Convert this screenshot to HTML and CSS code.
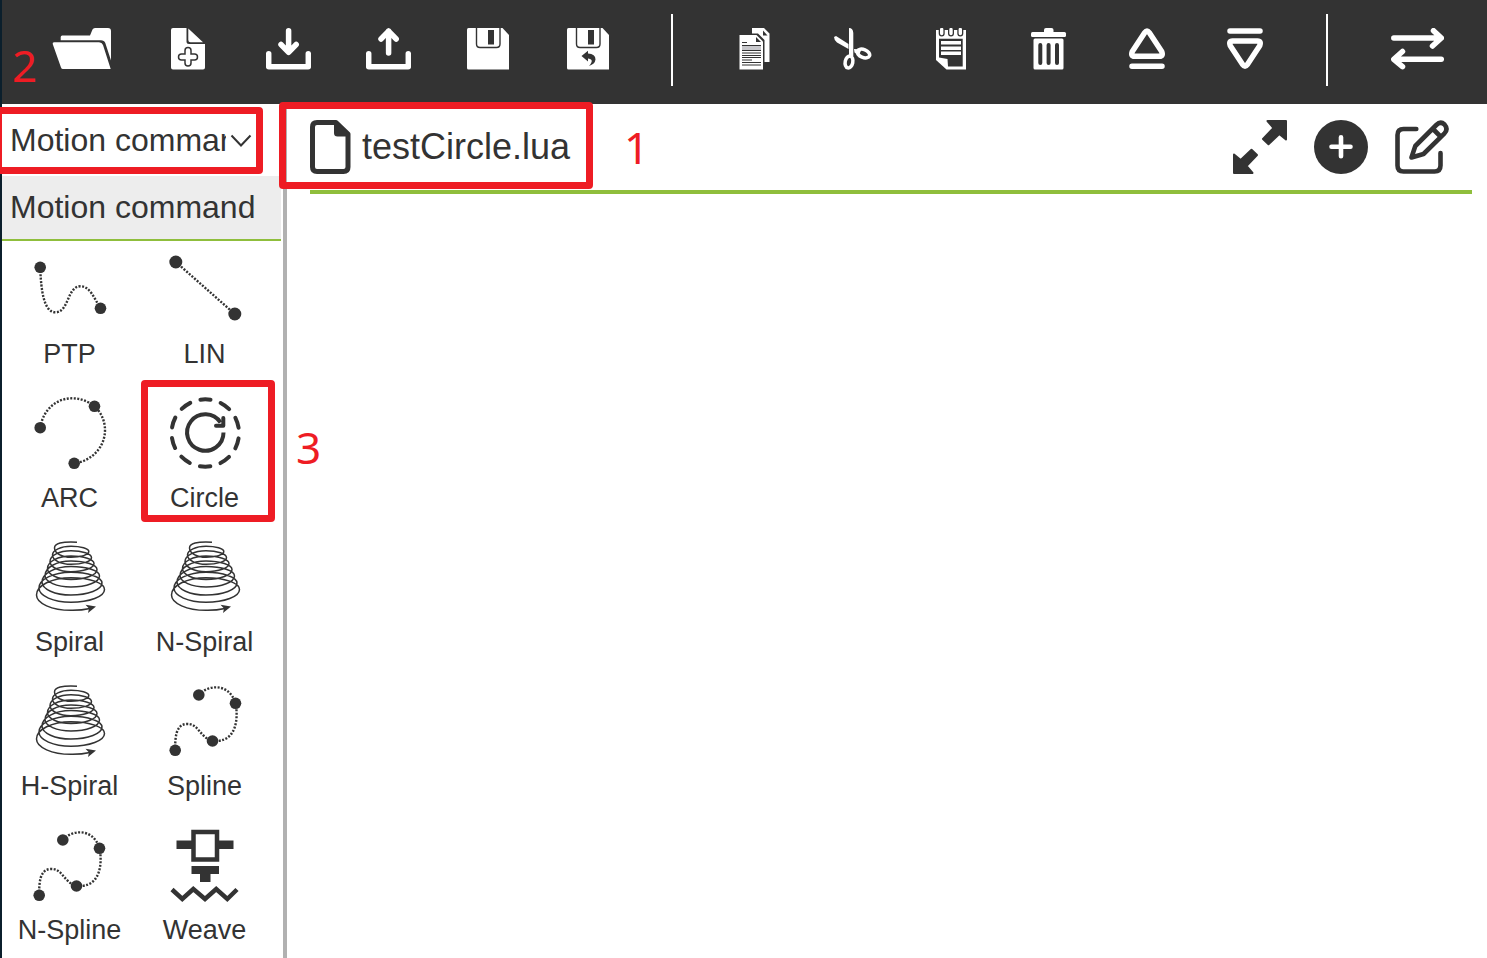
FILE: index.html
```html
<!DOCTYPE html>
<html lang="en">
<head>
<meta charset="utf-8">
<meta name="viewport" content="width=device-width, initial-scale=1">
<title>testCircle.lua</title>
<link rel="stylesheet" href="styles.css">
</head>
<body>
<svg class="defs" aria-hidden="true">
  <symbol id="spiral" viewBox="0 0 72 72">
    <path fill="none" stroke="currentColor" stroke-width="1.500" d="M43 1.2Q20.500 0 20.500 7A16.500 9.300 0 0 0 37 16.300A17.800 5.800 0 0 0 54.800 10.500A17.800 5.200 0 0 0 37 5.300A18.500 8.700 0 0 0 18.500 14A18.500 9.300 0 0 0 37 23.300A20.500 6.600 0 0 0 57.500 16.700A20.500 7 0 0 0 37 9.700A21 10.800 0 0 0 16 20.500A21 10.200 0 0 0 37 30.700A23 8.200 0 0 0 60 22.500A23 7.500 0 0 0 37 15A23.500 12.500 0 0 0 13.500 27.500A23.500 11 0 0 0 37 38.500A26 10 0 0 0 63 28.500A26 8.500 0 0 0 37 20A26 14.500 0 0 0 11 34.500A26 11.500 0 0 0 37 46A28.500 11 0 0 0 65.500 35A28.500 9.500 0 0 0 37 25.500A29 15.500 0 0 0 8 41A29 13 0 0 0 37 54A31 12 0 0 0 68 42A31 10.700 0 0 0 37 31.300A32 15.700 0 0 0 5 47A32 14.300 0 0 0 37 61.300A33.500 12.800 0 0 0 70.500 48.500A33.500 11.800 0 0 0 37 36.700A34.500 17.300 0 0 0 2.500 54A34.500 15.300 0 0 0 37 69.300Q47 69.500 56 67.500"/>
    <path fill="currentColor" d="M51.500 63.800L62 65.500 54 72 55 67.500Z"/>
  </symbol>
  <symbol id="spline" viewBox="0 0 72 72">
    <path fill="none" stroke="currentColor" stroke-width="2.400" stroke-dasharray="2 1.5" d="M29.800 10C38 0 60-3 66.500 18.300C69 30 69 55 48 56H43.500C30 52 30 38 17 39C7 40 6 52 6.200 65.300"/>
    <g fill="currentColor"><circle cx="29.800" cy="10" r="5.800"/><circle cx="66.500" cy="18.300" r="5.800"/><circle cx="43.500" cy="56" r="5.800"/><circle cx="6.200" cy="65.300" r="5.800"/></g>
  </symbol>
</svg>

<div class="app">
  <header class="toolbar">
    <div class="tools tools-file">
      <button class="tool tool-open" aria-label="Open"><svg width="60" height="44" fill="#fff"><path d="M8.700 12.300V9q0-1.500 1.500-1.500H38L40.500 1.500Q41.200 0 43 0H56Q59 0 59 3V32.500L53.300 15Q52.200 12.300 49 12.300Z"/><path d="M2 14.300H47Q50 14.300 51 17L58.700 41H11Q9.500 41 9 39.500L.7 16Q.4 14.300 2 14.300Z"/></svg></button>
      <button class="tool" aria-label="New"><svg width="34" height="44"><path fill="#fff" d="M2 0H15.500V13.500Q15.500 16 18 16H34V39.500q0 2-2 2H2q-2 0-2-2V2Q0 0 2 0ZM17.300.5L32 14.300H19.500Q17.300 14.300 17.300 12Z"/><path d="M17 22.500V35M10.500 29H23.500" stroke="#333" stroke-width="7.500" stroke-linecap="round"/><path d="M17 22.500V35M10.500 29H23.500" stroke="#fff" stroke-width="4.500" stroke-linecap="round"/></svg></button>
      <button class="tool" aria-label="Download"><svg width="45" height="44" class="line"><path d="M2.700 25.800V38.700H42.300V25.800M22.600 2.800V24M15 16.500L22.600 24.300 30.200 16.500"/></svg></button>
      <button class="tool" aria-label="Upload"><svg width="45" height="44" class="line"><path d="M2.700 25.800V38.700H42.300V25.800M22.600 3V25M15 11L22.600 3.200 30.200 11"/></svg></button>
      <button class="tool" aria-label="Save"><svg width="42" height="44"><path fill="#fff" d="M1.500 0H35.500L42 7V41.500H1.500Q0 41.500 0 40V1.500Q0 0 1.500 0Z"/><path fill="none" stroke="#333" stroke-width="1.400" d="M9.500 0V16q0 3.500 3.500 3.500H29.500q3.500 0 3.500-3.500V0"/><path fill="#333" d="M21 2H27V16.500H21Z"/></svg></button>
      <button class="tool" aria-label="Save as"><svg width="42" height="44"><path fill="#fff" d="M1.500 0H35.500L42 7V41.500H1.500Q0 41.500 0 40V1.500Q0 0 1.500 0Z"/><path fill="none" stroke="#333" stroke-width="1.400" d="M9.500 0V16q0 3.500 3.500 3.500H29.500q3.500 0 3.500-3.500V0"/><path fill="#333" d="M21 2H27V16.500H21ZM14.500 28L21 22.700V25.500Q28.500 26 28.500 31.500Q28 36 22 38Q25.500 34 24.500 32Q23.500 30.500 21 30.500V33.500Z"/></svg></button>
    </div>
    <span class="divider"></span>
    <div class="tools tools-edit">
      <button class="tool" aria-label="Copy"><svg width="31" height="44"><path fill="#fff" d="M13 5.500V0H25L30.500 5.500V34H25.500V12L19 5.500Z"/><path fill="#333" d="M24 2.500L28.500 7.500H24Z"/><path fill="#fff" d="M.5 7H17.500L24 13.500V41.500H.5Z"/><path fill="#333" d="M17 9L22 14H17Z"/><path fill="#c8c8cc" d="M3 18H22V22H3Z"/><path stroke="#333" d="M3 14.500H8M3 17.500H22M3 22.500H22M3 25H22M3 27.500H22M3 29.500H22M3 32H13M3 34.500H22M3 37H22"/></svg></button>
      <button class="tool" aria-label="Cut"><svg width="38" height="44"><path fill="#fff" d="M0 9L2 8 14.500 16V21L3 14.500Q0 12 0 9ZM15 0Q19 0 19.300 5V28L15 30ZM20 21L27.500 21.500 25 27 20.500 24.500Z"/><g fill="none" stroke="#fff" stroke-width="3.500"><ellipse cx="15" cy="34" rx="3.800" ry="6" transform="rotate(12 15 34)"/><ellipse cx="29.500" cy="25.500" rx="6.500" ry="4" transform="rotate(22 29.500 25.500)"/></g></svg></button>
      <button class="tool" aria-label="Notes"><svg width="30" height="44"><path fill="#fff" d="M0 2H30V41.500H10.500L0 32Z"/><path fill="#333" d="M3 10.700H26.700V38.500H12L11.500 31 3 29.500Z"/><path fill="#fff" d="M5 13H25V16.500H5ZM5 18.500H25V22H5ZM5 23.500H25V27H5Z"/><path stroke="#333" stroke-width="6" stroke-linecap="round" d="M5.700 1V5.500M15 1V5.500M24.300 1V5.500"/><path stroke="#fff" stroke-width="3.400" stroke-linecap="round" d="M5.700 1.500V5.500M15 1.500V5.500M24.300 1.500V5.500"/></svg></button>
      <button class="tool" aria-label="Delete"><svg width="36" height="44"><rect x="0" y="4" width="35" height="5" rx="1.500" fill="#fff"/><rect x="13" y="0" width="9.500" height="7" rx="2" fill="#fff"/><rect x="2.500" y="10.500" width="30" height="31" rx="1.500" fill="#fff"/><path stroke="#333" stroke-width="4" stroke-linecap="round" d="M9.300 17V35M17.600 17V35M26 17V35"/></svg></button>
      <button class="tool" aria-label="Move up"><svg width="36" height="44" class="line"><path d="M15.800 4.500Q18 1.400 20.200 4.500L32.700 23.500Q34.500 28.300 30.500 28.300H5.500Q1.500 28.300 3.300 23.500ZM3 38.300H33"/></svg></button>
      <button class="tool" aria-label="Move down"><svg width="36" height="44" class="line"><path transform="rotate(180 18 20.600)" d="M15.800 4.500Q18 1.400 20.200 4.500L32.700 23.500Q34.500 28.300 30.500 28.300H5.500Q1.500 28.300 3.300 23.500ZM3 38.300H33"/></svg></button>
    </div>
    <span class="divider"></span>
    <div class="tools">
      <button class="tool tool-swap" aria-label="Switch"><svg width="53" height="44" class="line"><path d="M2.800 10H50M42.500 2.700L50.300 10 41.500 18M50.300 31.300H3M11.500 23.500L2.800 31.300 11.500 38.700"/></svg></button>
    </div>
  </header>

  <div class="body">
    <aside class="sidebar">
      <div class="picker">
        <select class="picker-select" aria-label="Command group"><option>Motion command</option></select>
        <svg class="picker-arrow" width="22" height="14" fill="none" stroke="#333" stroke-width="2"><path d="M1.500 1.500L11 11.500 20.500 1.500"/></svg>
      </div>
      <h2 class="group-title">Motion command</h2>
      <div class="commands">
        <button class="command"><svg class="command-icon"><path class="dotted" d="M6.200 14C7 38 10 59.300 21.500 59.300C35 59.300 33 33.300 46.500 33.300C56 33.300 60 45 66.500 55.300"/><circle cx="6.200" cy="14.300" r="5.800"/><circle cx="66.500" cy="55.300" r="5.800"/></svg><span>PTP</span></button>
        <button class="command"><svg class="command-icon"><path class="dotted" d="M6.800 9L65.800 61"/><circle cx="6.800" cy="9" r="6.500"/><circle cx="65.800" cy="61" r="6.500"/></svg><span>LIN</span></button>
        <button class="command"><svg class="command-icon"><path class="dotted" d="M6.200 30.700C9 13 22 1.300 38.200 1.300C46 1.300 54 4 60.500 9.300C67 15 71 24 71 33C71 50 58 64 40.200 66.300"/><circle cx="6.200" cy="30.700" r="5.800"/><circle cx="60.500" cy="9.300" r="5.800"/><circle cx="40.200" cy="66.300" r="5.800"/></svg><span>ARC</span></button>
        <button class="command"><svg class="command-icon"><g fill="none" stroke="#333" stroke-width="4" stroke-linecap="round"><circle cx="36.300" cy="36" r="33.700" stroke-dasharray="10.500 10.674" stroke-dashoffset="5.250" transform="rotate(-90 36.300 36)"/><path d="M54.500 35.500A18.200 18.200 0 1 1 51.500 25.500" stroke-linecap="butt"/><path d="M54.300 21V28.700H47" stroke-linejoin="round"/></g></svg><span>Circle</span></button>
        <button class="command"><svg class="command-icon"><use href="#spiral"/></svg><span>Spiral</span></button>
        <button class="command"><svg class="command-icon"><use href="#spiral"/></svg><span>N-Spiral</span></button>
        <button class="command"><svg class="command-icon"><use href="#spiral"/></svg><span>H-Spiral</span></button>
        <button class="command"><svg class="command-icon"><use href="#spline"/></svg><span>Spline</span></button>
        <button class="command"><svg class="command-icon"><use href="#spline" x="-1" y="1"/></svg><span>N-Spline</span></button>
        <button class="command"><svg class="command-icon"><path d="M7.500 11.500H23V20H7.500ZM50 11.500H64.500V20H50ZM22.500 37H50V45H22.500ZM31 45H41.500V53H31Z"/><path fill="none" stroke="#333" stroke-width="4.500" d="M24.500 3H48V30.500H24.500ZM3 60.500L13.300 70 24.300 60 36 70 47.200 60 58.300 70 68 60.500"/></svg><span>Weave</span></button>
      </div>
    </aside>

    <main class="editor">
      <div class="editor-head">
        <svg class="file-icon" width="41" height="54"><path fill="none" stroke="#333" stroke-width="5" stroke-linejoin="round" d="M7 2.500H26L38 14V47q0 4.500-4.500 4.500H7Q2.500 51.500 2.500 47V7Q2.500 2.500 7 2.500Z"/><path fill="#333" d="M24 2V13q0 3.500 3.500 3.500H39V13L27 2Z"/></svg>
        <h1 class="file-name">testCircle.lua</h1>
        <div class="editor-actions">
          <button class="action" aria-label="Expand"><svg width="54" height="54" fill="#333" stroke="#333" stroke-width="2" stroke-linejoin="round"><path d="M34.500 1H53V19.500L46.300 14 35.500 24.300 30 19 40.500 8Z"/><path transform="rotate(180 27 27)" d="M34.500 1H53V19.500L46.300 14 35.500 24.300 30 19 40.500 8Z"/></svg></button>
          <button class="action" aria-label="Add"><svg width="54" height="54"><circle cx="27" cy="27" r="27" fill="#333"/><path stroke="#fff" stroke-width="4.600" stroke-linecap="round" d="M27 17.300V36.300M17.500 26.800H36.500"/></svg></button>
          <button class="action" aria-label="Edit"><svg width="54" height="54" fill="none" stroke="#333" stroke-width="4.600" stroke-linecap="round" stroke-linejoin="round"><path d="M21.300 9H8.500q-6 0-6 6V45.500q0 6 6 6H39.500q6 0 6-6V33M16.500 37.500L20.300 26 41.300 5Q45.500.8 49.500 4.500Q53.500 9 49.500 13.300L28.500 34ZM38 9L45.500 16.500"/></svg></button>
        </div>
      </div>
    </main>
  </div>

  <span class="mark mark-picker"></span>
  <span class="mark mark-file"></span>
  <span class="mark mark-circle"></span>
  <span class="step step-1">1</span>
  <span class="step step-2">2</span>
  <span class="step step-3">3</span>
</div>
</body>
</html>
```
FILE: styles.css
```css
* {
  box-sizing: border-box;
}

body {
  margin: 0;
  background: #fff;
  color: #333;
  font-family: "Liberation Sans", Arial, sans-serif;
}

button {
  margin: 0;
  padding: 0;
  border: 0;
  background: none;
  color: inherit;
  font: inherit;
  cursor: pointer;
}

svg {
  display: block;
}

.defs {
  position: absolute;
  width: 0;
  height: 0;
}

symbol {
  overflow: visible;
}

.app {
  position: relative;
  display: flex;
  flex-direction: column;
  min-height: 100vh;
  border-left: 2px solid #0b1f2c;
  overflow: clip;
  overflow-clip-margin: 2px;
}

/* Toolbar */

.toolbar {
  display: flex;
  align-items: center;
  justify-content: space-between;
  height: 104px;
  padding: 0 14px 4px 24px;
  background: #333;
}

.tools {
  display: flex;
}

.tool {
  display: flex;
  justify-content: center;
  width: 98px;
}

.tools-file .tool {
  width: 100px;
}

.tools-file .tool-open,
.tool-swap {
  width: 112px;
}

.line {
  fill: none;
  stroke: #fff;
  stroke-width: 5.5px;
  stroke-linecap: round;
  stroke-linejoin: round;
}

.divider {
  width: 2px;
  height: 72px;
  background: #fff;
}

/* Sidebar */

.body {
  display: flex;
  flex: 1;
}

.sidebar {
  flex: none;
  width: 285px;
  padding-right: 2px;
  border-right: 4px solid #b1b1b1;
}

.picker {
  position: relative;
  height: 72px;
}

.picker-select {
  width: 260px;
  height: 72px;
  padding: 0 36px 0 8px;
  border: 0;
  background: none;
  color: #333;
  font: 32px "Liberation Sans", Arial, sans-serif;
  appearance: none;
}

.picker-arrow {
  position: absolute;
  top: 30px;
  left: 228px;
  pointer-events: none;
}

.group-title {
  margin: 0;
  padding: 0 8px;
  border-bottom: 2px solid #8fbe3c;
  background: #ededed;
  font-size: 32px;
  font-weight: 400;
  line-height: 63px;
}

.commands {
  display: grid;
  grid-template-columns: 1fr 1fr;
  row-gap: 25px;
  padding: 12px 9px 8px 0;
}

.command {
  display: flex;
  flex-direction: column;
  align-items: center;
  gap: 11px;
  font-size: 27px;
  line-height: 36px;
}

.command-icon {
  width: 72px;
  height: 72px;
  fill: #333;
  overflow: visible;
}

.command-icon use {
  width: 72px;
  height: 72px;
}

.dotted {
  fill: none;
  stroke: #333;
  stroke-width: 2.4px;
  stroke-dasharray: 2 1.5;
}

/* Editor */

.editor {
  flex: 1;
  padding: 0 15px 0 23px;
}

.editor-head {
  display: flex;
  align-items: center;
  height: 90px;
  padding-right: 23px;
  border-bottom: 4px solid #8fbe3c;
}

.file-name {
  margin: 0 0 0 11px;
  font-size: 36px;
  font-weight: 400;
  line-height: 44px;
}

.editor-actions {
  display: flex;
  gap: 27px;
  margin-left: auto;
}

/* Tutorial marks laid over the interface */

.mark {
  position: absolute;
  border: 7px solid #ee1c24;
  border-radius: 4px;
  pointer-events: none;
}

.mark-picker {
  top: 107px;
  left: -7px;
  width: 268px;
  height: 67px;
}

.mark-file {
  top: 102px;
  left: 277px;
  width: 314px;
  height: 87px;
}

.mark-circle {
  top: 380px;
  left: 139px;
  width: 134px;
  height: 142px;
}

.step {
  position: absolute;
  color: #ee1c24;
  font: 44px/60px "Noto Sans", "Open Sans", sans-serif;
  pointer-events: none;
}

.step-1 {
  top: 117px;
  left: 622px;
}

.step-2 {
  top: 35px;
  left: 10px;
}

.step-3 {
  top: 417px;
  left: 294px;
}
```
